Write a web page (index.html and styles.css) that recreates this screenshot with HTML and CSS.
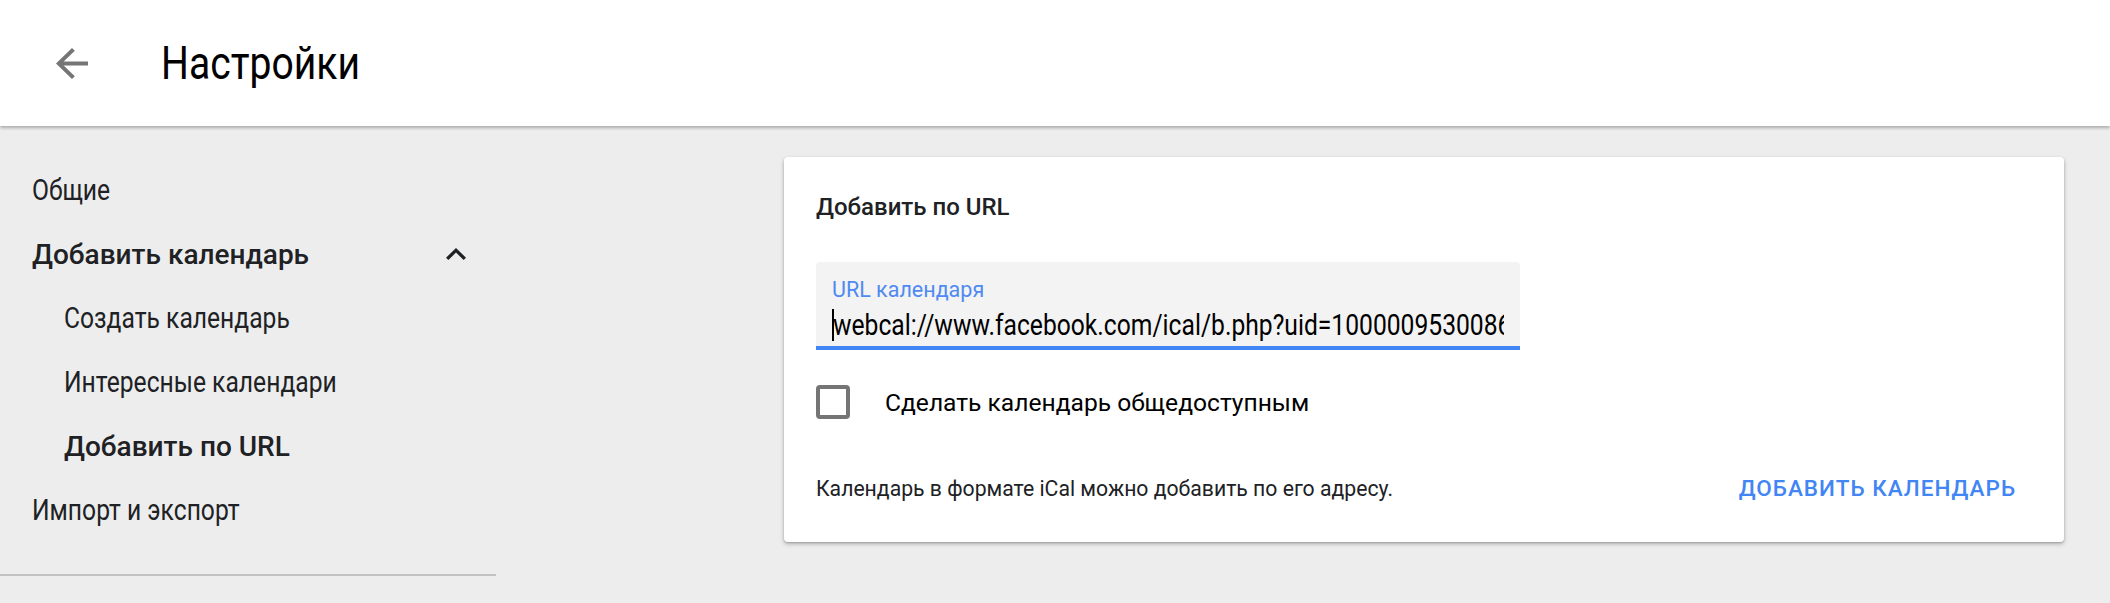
FILE: index.html
```html
<!DOCTYPE html>
<html>
<head>
    <title>Настройки</title>
    <link rel="stylesheet" href="styles.css">
</head>
<body>
    <div class="header">
        <button class="back-btn" aria-label="Назад">
            <svg width="32" height="31" viewBox="4 4 16 16" preserveAspectRatio="none">
                <path d="M20 11H7.83l5.59-5.59L12 4l-8 8 8 8 1.41-1.41L7.83 13H20v-2z" fill="#757575"/>
            </svg>
        </button>
        <span class="header-title condensed">Настройки</span>
    </div>

    <div class="layout">
        <!-- Settings navigation -->
        <div class="sidebar">
            <div class="nav-item"><span class="condensed">Общие</span></div>
            <div class="nav-item nav-bold">
                <span>Добавить календарь</span>
                <svg class="chevron" width="20" height="12" viewBox="6 8 12 7.41" preserveAspectRatio="none">
                    <path d="M12 8l-6 6 1.41 1.41L12 10.83l4.59 4.58L18 14z" fill="#202124"/>
                </svg>
            </div>
            <div class="nav-item nav-sub"><span class="condensed">Создать календарь</span></div>
            <div class="nav-item nav-sub"><span class="condensed">Интересные календари</span></div>
            <div class="nav-item nav-sub nav-bold"><span>Добавить по URL</span></div>
            <div class="nav-item"><span class="condensed">Импорт и экспорт</span></div>
            <div class="nav-divider"></div>
        </div>

        <!-- Add by URL card -->
        <div class="content">
            <div class="card">
                <div class="card-title">Добавить по URL</div>

                <div class="url-field">
                    <label class="url-label">URL календаря</label>
                    <div class="url-value"><span class="caret"></span><span class="condensed">webcal://www.facebook.com/ical/b.php?uid=1000009530086&amp;key=AQBkQ3sP</span></div>
                </div>

                <div class="check-row">
                    <span class="checkbox"></span>
                    <span class="check-label">Сделать календарь общедоступным</span>
                </div>

                <div class="card-footer">
                    <span class="hint">Календарь в формате iCal можно добавить по его адресу.</span>
                    <button class="text-btn">ДОБАВИТЬ КАЛЕНДАРЬ</button>
                </div>
            </div>
        </div>
    </div>
</body>
</html>
```

FILE: styles.css
```css
body {
    margin: 0;
    padding: 0;
    font-family: Roboto, 'Noto Sans', sans-serif;
    background: #ededed;
    color: #202124;
    height: 603px;
    overflow: hidden;
}

/* narrow face for regular text */
.condensed {
    display: inline-block;
    transform: scaleX(0.85);
    transform-origin: 0 50%;
}

.header {
    height: 126px;
    background: #fff;
    display: flex;
    align-items: center;
    box-shadow: 0 2px 3px rgba(0, 0, 0, 0.28);
    position: relative;
    z-index: 1;
}

.back-btn {
    background: none;
    border: none;
    padding: 0;
    margin-left: 56px;
    width: 32px;
    height: 31px;
    display: flex;
    cursor: pointer;
}

.header-title {
    margin-left: 73px;
    font-size: 46px;
    color: #000;
}

.layout {
    display: flex;
}

.sidebar {
    width: 496px;
    padding-top: 32px;
    flex-shrink: 0;
}

.nav-item {
    height: 64px;
    display: flex;
    align-items: center;
    padding-left: 32px;
    font-size: 29px;
    color: #202124;
}

.nav-sub {
    padding-left: 64px;
}

.nav-bold {
    font-size: 28px;
    font-weight: 500;
}

.chevron {
    margin-left: auto;
    margin-right: 30px;
}

.nav-divider {
    height: 2px;
    background: #c2c2c2;
    margin-top: 32px;
}

.content {
    flex: 1;
    padding: 31px 46px 0 288px;
}

.card {
    background: #fff;
    border-radius: 4px;
    box-shadow: 0 2px 4px rgba(0, 0, 0, 0.25), 0 1px 2px rgba(0, 0, 0, 0.15);
    padding: 0 32px;
    height: 385px;
    box-sizing: border-box;
}

.card-title {
    padding-top: 36px;
    height: 69px;
    box-sizing: border-box;
    font-size: 24px;
    font-weight: 500;
    color: #202124;
}

.url-field {
    margin-top: 36px;
    width: 704px;
    height: 88px;
    box-sizing: border-box;
    background: #f3f3f3;
    border-radius: 4px 4px 0 0;
    border-bottom: 4px solid #4285f4;
    padding: 15px 16px 0 16px;
    overflow: hidden;
}

.url-label {
    display: block;
    font-size: 21.5px;
    color: #4f8af2;
    line-height: 26px;
}

.url-value {
    margin-top: 4px;
    font-size: 29px;
    color: #000;
    white-space: nowrap;
    overflow: hidden;
    line-height: 36px;
}

.caret {
    display: inline-block;
    width: 2px;
    height: 32px;
    background: #000;
    vertical-align: -6px;
    margin-right: -1px;
}

.check-row {
    display: flex;
    align-items: center;
    margin-top: 35px;
}

.checkbox {
    width: 34px;
    height: 34px;
    box-sizing: border-box;
    border: 4px solid #757575;
    border-radius: 4px;
}

.check-label {
    margin-left: 35px;
    font-size: 24.6px;
    color: #000;
}

.card-footer {
    display: flex;
    align-items: center;
    justify-content: space-between;
    margin-top: 48px;
}

.hint {
    font-size: 21.2px;
    color: #202124;
}

.text-btn {
    background: none;
    border: none;
    font-family: inherit;
    font-size: 22.5px;
    font-weight: 500;
    letter-spacing: 1px;
    color: #4285f4;
    padding: 8px 16px;
    cursor: pointer;
}
```
